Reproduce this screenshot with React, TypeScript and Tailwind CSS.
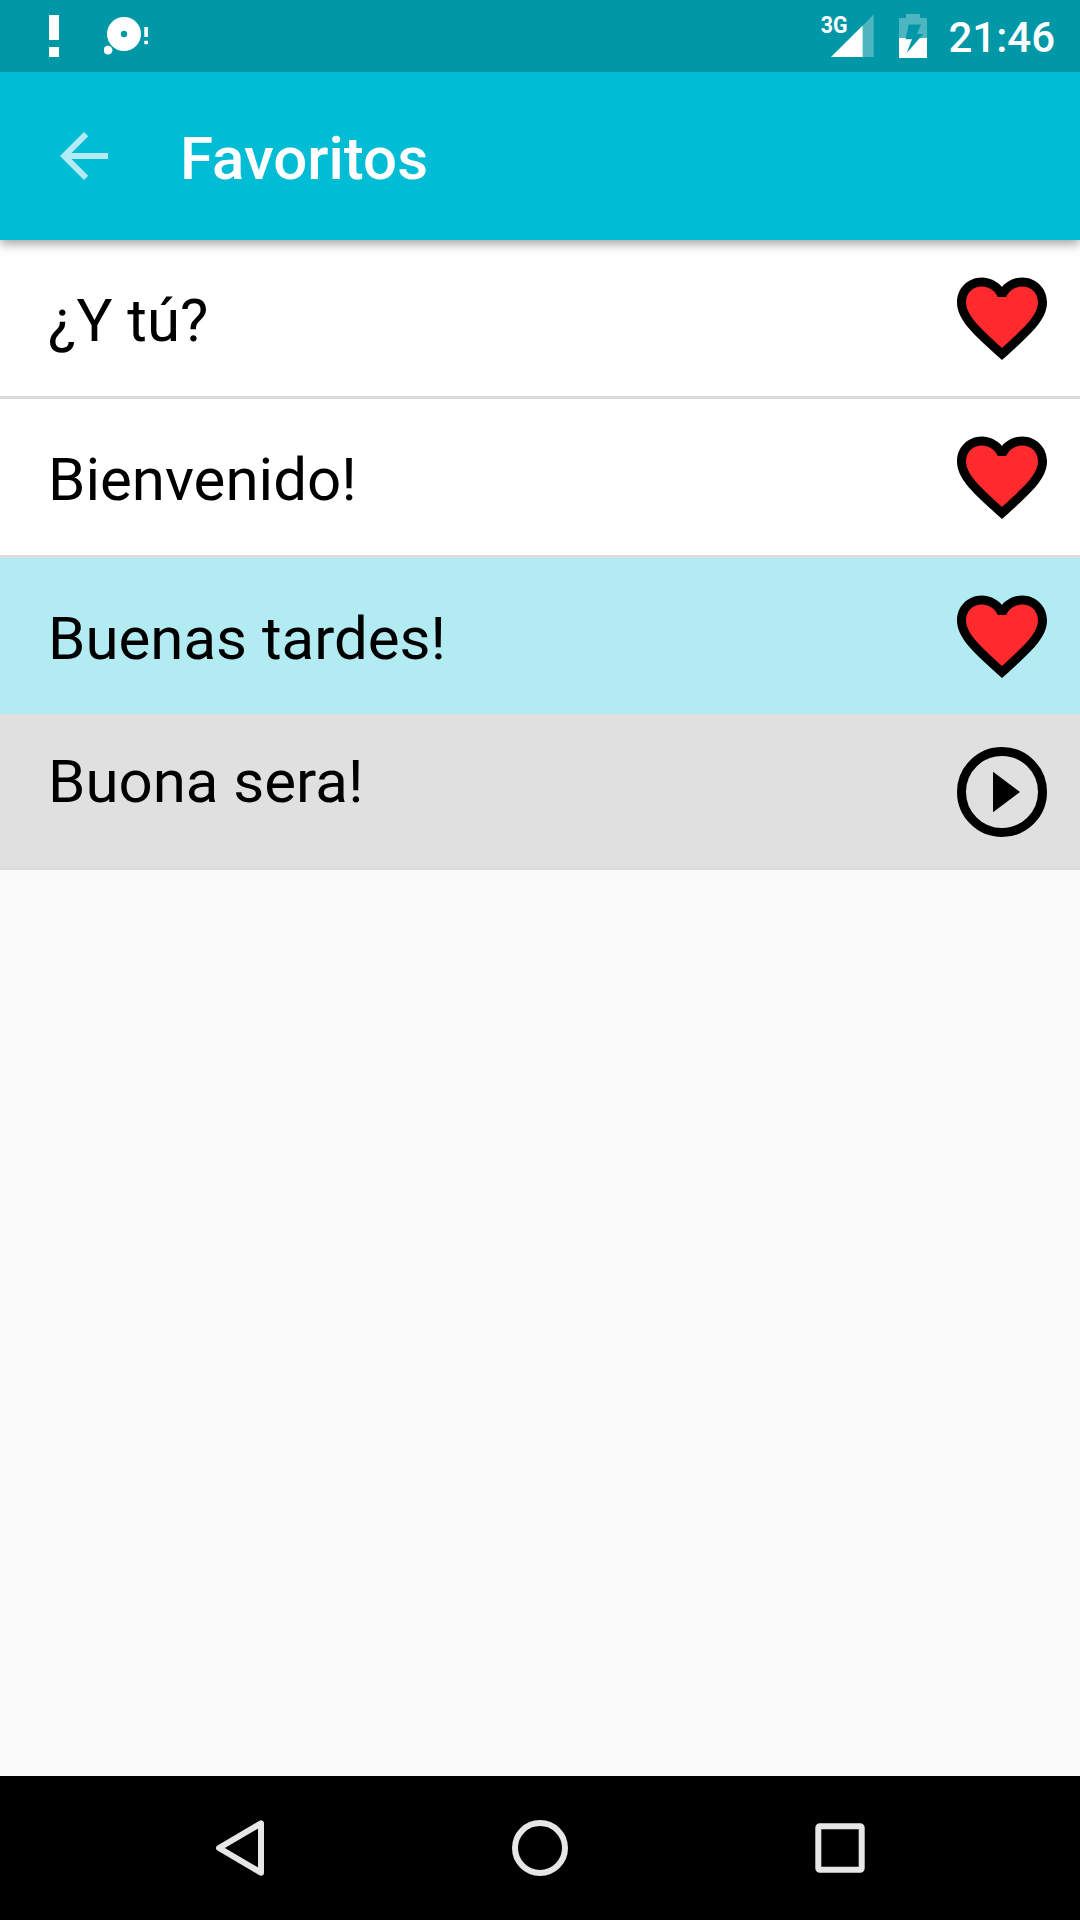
import clsx from "clsx";

type Phrase = {
  text: string;
  selected?: boolean;
};

const phrases: Phrase[] = [
  { text: "¿Y tú?" },
  { text: "Bienvenido!" },
  { text: "Buenas tardes!", selected: true },
];

function StatusBar() {
  return (
    <div className="relative z-10 flex h-[72px] items-center justify-between bg-[#0097a7] pr-[25px] pl-12">
      {/* Notifications */}
      <div className="flex items-center gap-11">
        <svg width="12" height="72" viewBox="0 0 12 72" fill="white">
          <path d="M1 15h10v25H1zM1 47h10v10H1z" />
        </svg>
        <svg width="48" height="72" viewBox="0 0 48 72" fill="white">
          <path
            fillRule="evenodd"
            d="M20 17a17 17 0 1 0 0 34a17 17 0 1 0 0-34zM20 30.8a3.2 3.2 0 1 1 0 6.4a3.2 3.2 0 1 1 0-6.4z"
          />
          <circle cx="4" cy="50.2" r="4.4" />
          <path d="M40.3 27h3.6v10h-3.6zM40.3 40.7h3.6v3.6h-3.6z" />
        </svg>
      </div>

      {/* Signal, battery and clock */}
      <div className="flex items-center">
        <svg width="54" height="72" viewBox="0 0 54 72" fill="white">
          <path d="M53.7 14.5V57H43V25.2z" fillOpacity="0.3" />
          <path d="M11 57L42.7 25.5V57z" />
          <text
            x="0.8"
            y="33"
            fontSize="24.5"
            fontWeight="700"
            fontFamily="Roboto, sans-serif"
            textLength="26.8"
            lengthAdjust="spacingAndGlyphs"
          >
            3G
          </text>
        </svg>
        <svg className="ml-6" width="30" height="72" viewBox="0 0 30 72" fill="white">
          <path fillOpacity="0.3" d="M8 14h14v4h7v20H1V18h7z" />
          <path d="M1 38h28v20H1z" />
          <path fill="#0097a7" d="M10.700 24.600H23L19 34h6.300L8.700 53L14 39.300H7.500z" />
        </svg>
        <span className="ml-5 pt-[3px] text-[42px] leading-none font-medium text-white">21:46</span>
      </div>
    </div>
  );
}

function AppBar() {
  return (
    <header className="relative flex h-[168px] items-center bg-[#00bcd4] pl-12 shadow-[0_4px_10px_rgba(0,0,0,0.36)]">
      <button aria-label="Volver">
        <svg width="72" height="72" viewBox="0 0 24 24" fill="#b2ebf2">
          <path d="M20 11H7.83l5.59-5.59L12 4l-8 8 8 8 1.41-1.41L7.83 13H20v-2z" />
        </svg>
      </button>
      <h1 className="ml-15 pt-1.5 text-[60px] leading-[70px] font-medium text-white">Favoritos</h1>
    </header>
  );
}

function HeartIcon() {
  return (
    <svg width="108" height="108" viewBox="0 0 24 24">
      <path d="M12 21.35l-1.45-1.32C5.4 15.36 2 12.28 2 8.5 2 5.42 4.42 3 7.5 3c1.74 0 3.41.81 4.5 2.09C13.09 3.81 14.76 3 16.5 3 19.58 3 22 5.42 22 8.5c0 3.78-3.4 6.86-8.55 11.54L12 21.35z" />
      <path
        fill="#ff2a2e"
        d="M12.1 18.55l-.1.1-.11-.1C7.14 14.24 4 11.39 4 8.5 4 6.5 5.5 5 7.5 5c1.54 0 3.04.99 3.57 2.36h1.87C13.46 5.99 14.96 5 16.5 5c2 0 3.5 1.5 3.5 3.5 0 2.89-3.14 5.74-7.9 10.05z"
      />
    </svg>
  );
}

function PlayIcon() {
  return (
    <svg width="108" height="108" viewBox="0 0 24 24">
      <circle cx="12" cy="12" r="9" fill="none" stroke="black" strokeWidth="2" />
      <path d="M10 16.5l6-4.5-6-4.5v9z" />
    </svg>
  );
}

function NavBar() {
  return (
    <nav className="flex h-36 items-center justify-center gap-60 bg-black">
      <svg width="60" height="60" viewBox="0 0 60 60" fill="none" stroke="#e6e6e6" strokeWidth="6" strokeLinejoin="round">
        <path d="M9 30L51 5.300v49.400z" />
      </svg>
      <svg width="60" height="60" viewBox="0 0 60 60" fill="none" stroke="#e6e6e6" strokeWidth="6">
        <circle cx="30" cy="30" r="25" />
      </svg>
      <svg width="60" height="60" viewBox="0 0 60 60" fill="none" stroke="#e6e6e6" strokeWidth="6">
        <rect x="8.3" y="8.3" width="43.4" height="43.4" rx="1.5" />
      </svg>
    </nav>
  );
}

export default function App() {
  return (
    <div className="flex h-[1920px] w-[1080px] flex-col bg-[#fafafa] font-[Roboto,sans-serif] text-black">
      <StatusBar />
      <AppBar />

      <main className="flex-1">
        {phrases.map((phrase) => (
          <div
            key={phrase.text}
            className={clsx(
              "flex items-center justify-between pr-6 pl-12",
              phrase.selected ? "h-[156px] bg-[#b2ebf2]" : "h-[159px] border-b-3 border-[#dcdcdc] bg-white"
            )}
          >
            <span className="pt-1.5 text-[60px] leading-[70px]">{phrase.text}</span>
            <HeartIcon />
          </div>
        ))}

        {/* Translation of the selected phrase */}
        <div className="flex h-[156px] justify-between border-b-3 border-[#dcdcdc] bg-[#e0e0e0] pt-6 pr-6 pl-12">
          <span className="pt-[9px] text-[60px] leading-[70px]">Buona sera!</span>
          <PlayIcon />
        </div>
      </main>

      <NavBar />
    </div>
  );
}
